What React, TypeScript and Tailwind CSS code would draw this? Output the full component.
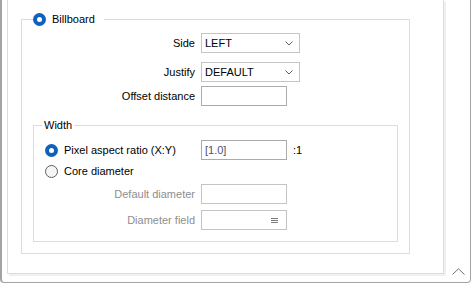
import type { ReactNode } from "react";

function Radio({ checked }: { checked: boolean }) {
  if (checked) {
    return (
      <span className="flex h-[13px] w-[13px] shrink-0 items-center justify-center rounded-full bg-[#0f61bd]">
        <span className="h-[5px] w-[5px] rounded-full bg-white" />
      </span>
    );
  }
  return <span className="h-[13px] w-[13px] shrink-0 rounded-full border border-[#5f5f5f] bg-[#f5f5f5]" />;
}

function Select({ value }: { value: string }) {
  return (
    <div className="flex h-[20px] w-[99px] items-center justify-between border border-[#c4c4c4] bg-white pl-[3px] pr-[6px] text-black">
      <span>{value}</span>
      <svg width="8" height="5" viewBox="0 0 8 5" fill="none" stroke="#606060" strokeWidth="1">
        <path d="M0.5 0.5 L4 4 L7.5 0.5" />
      </svg>
    </div>
  );
}

function Input({ children, disabled }: { children?: ReactNode; disabled?: boolean }) {
  return (
    <div
      className={`flex h-[20px] w-[86px] items-center border bg-white px-[3px] ${
        disabled ? "border-[#c4c4c4]" : "border-[#ababab]"
      }`}
    >
      {children}
    </div>
  );
}

function Row({ label, width, muted, children }: { label: string; width: string; muted?: boolean; children: ReactNode }) {
  return (
    <div className="flex h-[20px] items-center gap-[6px]">
      <span className={`${width} text-right ${muted ? "text-[#8e8e8e]" : "text-black"}`}>{label}</span>
      {children}
    </div>
  );
}

export default function App() {
  return (
    <div className="flex h-[283px] w-[471px] rounded-b-[4px] border-b border-l-2 border-r border-[#a3a3a3] bg-white font-['Liberation_Sans',Arial,sans-serif] text-[11px] leading-[14px]">
      {/* Panel */}
      <div className="ml-[5px] h-[274px] w-[437px] border-x border-b border-[#dcdcdc] shadow-[2px_2px_0_0_#f0f0f0]">
        {/* Billboard group */}
        <fieldset className="ml-[13px] mt-[12px] w-[389px] border border-[#dcdcdc] pb-[11px]">
          <legend className="ml-[11px] pr-[9px]">
            <span className="flex h-[14px] items-center gap-[6px] text-black">
              <Radio checked />
              Billboard
            </span>
          </legend>
          <div className="pt-[7px]">
            <Row label="Side" width="w-[173px]">
              <Select value="LEFT" />
            </Row>
            <div className="mt-[9px]">
              <Row label="Justify" width="w-[173px]">
                <Select value="DEFAULT" />
              </Row>
            </div>
            <div className="mt-[4px]">
              <Row label="Offset distance" width="w-[173px]">
                <Input />
              </Row>
            </div>

            {/* Width group */}
            <fieldset className="ml-[11px] mt-[12px] w-[365px] border border-[#dcdcdc] pb-[11px]">
              <legend className="ml-[8px] px-[2px]">
                <span className="flex h-[14px] items-center text-black">Width</span>
              </legend>
              <div className="pt-[8px]">
                <div className="flex h-[20px] items-center gap-[6px]">
                  <span className="flex w-[161px] items-center gap-[6px] pl-[11px] text-black">
                    <Radio checked />
                    Pixel aspect ratio (X:Y)
                  </span>
                  <Input>
                    <span className="text-[#4f5068]">[1.0]</span>
                  </Input>
                  <span className="text-black">:1</span>
                </div>
                <div className="mt-[1px] flex h-[20px] items-center">
                  <span className="flex w-[161px] items-center gap-[6px] pl-[11px] text-black">
                    <Radio checked={false} />
                    Core diameter
                  </span>
                </div>
                <div className="mt-[3px]">
                  <Row label="Default diameter" width="w-[161px]" muted>
                    <Input disabled />
                  </Row>
                </div>
                <div className="mt-[6px]">
                  <Row label="Diameter field" width="w-[161px]" muted>
                    <div className="flex h-[20px] w-[86px] items-center justify-end border border-[#c4c4c4] bg-white pr-[8px]">
                      <svg width="7" height="7" viewBox="0 0 7 7" stroke="#7a7a7a" strokeWidth="1">
                        <path d="M0 1.5 H7 M0 3.5 H7 M0 5.5 H7" />
                      </svg>
                    </div>
                  </Row>
                </div>
              </div>
            </fieldset>
          </div>
        </fieldset>
      </div>

      {/* Scroll corner */}
      <div className="flex flex-1 flex-col items-center justify-end pb-[7px] pl-[3px]">
        <svg width="13" height="7" viewBox="0 0 13 7" fill="none" stroke="#6e6e6e" strokeWidth="1">
          <path d="M0.5 6.5 L6.5 0.8 L12.5 6.5" />
        </svg>
      </div>
    </div>
  );
}
